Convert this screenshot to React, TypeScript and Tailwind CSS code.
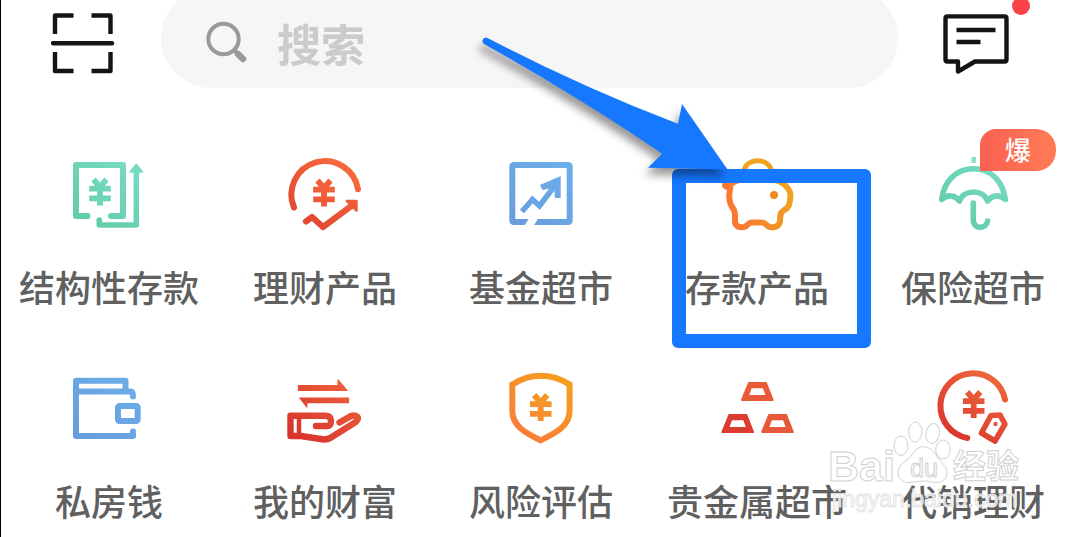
import type { ReactNode } from "react";

type Tone = "green" | "red" | "blue" | "orange" | "crimson";

const tones: Record<Tone, [string, string]> = {
  green: ["#78dcc4", "#62cbab"],
  red: ["#fb6c3c", "#df4634"],
  blue: ["#6bb0ea", "#699ddd"],
  orange: ["#f5a01e", "#fb7a3a"],
  crimson: ["#f0683c", "#d8342e"],
};

function Glyph({ id, tone, children }: { id: string; tone: Tone; children: ReactNode }) {
  const [from, to] = tones[tone];
  const paint = `url(#${id})`;
  return (
    <svg
      className="size-[88px]"
      viewBox="0 0 88 88"
      fill="none"
      stroke={paint}
      strokeWidth="6"
      strokeLinecap="round"
      strokeLinejoin="round"
      aria-hidden="true"
    >
      <defs>
        <linearGradient id={id} gradientUnits="userSpaceOnUse" x1="70" y1="10" x2="22" y2="76">
          <stop offset="0" stopColor={from} />
          <stop offset="1" stopColor={to} />
        </linearGradient>
      </defs>
      {children}
    </svg>
  );
}

function Yen({ x, y }: { x: number; y: number }) {
  return (
    <path
      transform={`translate(${x} ${y})`}
      d="M-6.5 -12.5 0 -5 6.5 -12.5M-10.8 -3.4H10.8M-10.8 6.4H10.8M0 -6V13.4"
      strokeWidth="5.8"
      strokeLinecap="butt"
      strokeLinejoin="miter"
    />
  );
}

function Structured() {
  return (
    <Glyph id="g-structured" tone="green">
      <path d="M22.5 66H11V15H58V66H46" />
      <path d="M34.3 70V75H71.3V22" strokeWidth="5.6" />
      <path d="M71.3 14.3 77.5 22H65Z" fill="#75d9c0" strokeWidth="1.5" />
      <Yen x={35} y={42} />
    </Glyph>
  );
}

function Wealth() {
  return (
    <Glyph id="g-wealth" tone="red">
      <path d="M13 57.5A33.5 33.5 0 1 1 77 39.3" />
      <path d="M25 71.5 31 67 42 77 71 55.5" strokeWidth="6.2" />
      <path d="M66 51H75.5V60.5Z" fill="#f0582f" strokeWidth="2.5" />
      <Yen x={43} y={43} />
    </Glyph>
  );
}

function Fund() {
  return (
    <Glyph id="g-fund" tone="blue">
      <rect x="15.3" y="15" width="57.4" height="57" rx="1.5" />
      <path d="M32.5 68 41.5 68 36.5 76 27 76Z" fill="#fff" stroke="none" />
      <path
        d="M25 61.5 35.5 49.5 42.5 56 59 34"
        strokeWidth="5.5"
        strokeLinecap="butt"
        strokeLinejoin="miter"
      />
      <path d="M43 35 63.7 26V48H58L57 37.5 45.5 40Z" fill="url(#g-fund)" stroke="none" />
    </Glyph>
  );
}

function Piggy() {
  return (
    <svg
      className="size-[88px]"
      viewBox="0 0 88 88"
      fill="none"
      stroke="url(#g-piggy)"
      strokeWidth="6"
      strokeLinecap="round"
      strokeLinejoin="round"
      aria-hidden="true"
    >
      <defs>
        <linearGradient id="g-piggy" gradientUnits="userSpaceOnUse" x1="14" y1="60" x2="76" y2="38">
          <stop offset="0" stopColor="#fb7434" />
          <stop offset="1" stopColor="#efa31f" />
        </linearGradient>
      </defs>
      <path d="M31.5 19C35 8 54 8 58 19" stroke="#efa31f" strokeWidth="5" />
      <path d="M12 35C12 37 15 37 17.5 36.5C15.5 45 15.5 50 18 55C20 59 22 60 22 64V71C22 77 27 77.5 31 77C35 76 35 72.5 39 72.5H49C53 72.5 53 76 57 77C62 78 66.5 76 67 71C67.3 66 67 63 70 61C73 59 75 58 76 55C77 52 77.5 47 77.5 44C77 40 74 37 71 34C60 26 28 26 17.5 34Z" />
      <circle cx="61" cy="45" r="4" fill="#f08c20" stroke="none" />
    </svg>
  );
}

function Umbrella() {
  return (
    <Glyph id="g-umbrella" tone="green">
      <path d="M44.7 7V13" stroke="#8fe0cc" strokeWidth="4.5" strokeLinecap="butt" />
      <path
        d="M12.7 49.5C15 31 27 18.7 44.5 18.7S74 31 76.3 49.5C70 44 63 45 58.5 51C54 39 35 39 30.5 51C26 45 19 44 12.7 49.5Z"
        strokeWidth="5.6"
      />
      <path d="M44.3 53V70C44.3 79.5 57.5 79.5 58.5 71" strokeWidth="5.6" />
    </Glyph>
  );
}

function Wallet() {
  return (
    <Glyph id="g-wallet" tone="blue">
      <path d="M68 67.5V72H11V16.8H60.5V27" />
      <path d="M11 27.5H66Q68 27.5 68 32.5" />
      <rect x="53" y="42" width="19.7" height="15" rx="1.5" />
    </Glyph>
  );
}

function Hand() {
  return (
    <Glyph id="g-hand" tone="crimson">
      <path d="M17.5 21.5H57V15.8L66 26.5H17.5Z" fill="url(#g-hand)" strokeWidth="1.2" />
      <path d="M67.5 34H18.8L25.8 43V38.6H67.5Z" fill="url(#g-hand)" strokeWidth="1.2" />
      <path
        d="M35 62H46Q50 62 50 57Q50 51.8 44 51.8H9.5V72H20L43 75.5Q47 75.5 50 73.5L74 58.5Q78.5 55 76 52.5Q73.5 50.5 69 52.5L58.5 58.5"
        strokeWidth="6.4"
      />
      <path d="M18 52V72" strokeWidth="4.5" />
    </Glyph>
  );
}

function Shield() {
  return (
    <Glyph id="g-shield" tone="orange">
      <path
        d="M43.7 11.8C34 11.8 24 15 15.3 20.5V47C15.3 63 31 70 43.7 76.3C56.5 70 72.6 63 72.6 47V20.5C64 15 53.5 11.8 43.7 11.8Z"
        strokeLinejoin="miter"
      />
      <Yen x={43.7} y={43.5} />
    </Glyph>
  );
}

function Ingots() {
  const ingot = "M36 19H53L59.7 36H29ZM38 23.2 34.8 32H53.8L50.6 23.2Z";
  return (
    <Glyph id="g-ingots" tone="crimson">
      <g fillRule="evenodd" strokeWidth="2">
        <path d={ingot} fill="#e95a38" stroke="#e95a38" />
        <path d={ingot} transform="translate(-19.6 32)" fill="#dc3c30" stroke="#dc3c30" />
        <path d={ingot} transform="translate(20.2 32)" fill="#e65a3b" stroke="#e65a3b" />
      </g>
    </Glyph>
  );
}

function Agency() {
  return (
    <Glyph id="g-agency" tone="crimson">
      <path d="M76 35.5A32.6 32.6 0 1 0 38.3 74" />
      <path d="M62 51.5 71 51 76 60 66 77 52.5 69Z" strokeWidth="5.6" />
      <circle cx="66.5" cy="60" r="2.2" fill="#df5a40" stroke="none" />
      <Yen x={44.7} y={40.5} />
    </Glyph>
  );
}

function Callout() {
  return (
    <div className="pointer-events-none absolute top-[19px] left-1/2 z-10 -ml-[85px] h-[179px] w-[199px] rounded-md border-[14px] border-[#1677ff]">
      <svg
        className="absolute -top-[163px] -left-[216px] h-[170px] w-[270px] drop-shadow-[-3px_7px_4px_rgba(0,0,0,0.4)]"
        viewBox="470 20 270 170"
        aria-hidden="true"
      >
        <path
          d="M487.5 38Q584 88 678 123.7L682 104 727.5 169.5 648 167.7 662.3 153.7Q580 98 484.5 44.2A3.4 3.4 0 0 1 487.5 38Z"
          fill="#1677ff"
        />
      </svg>
    </div>
  );
}

function Watermark() {
  return (
    <svg
      className="pointer-events-none absolute right-[50px] bottom-3 h-[110px] w-[210px]"
      viewBox="0 0 210 110"
      fill="#fff"
      fillOpacity="0.75"
      stroke="#d0d0d0"
      strokeWidth="1"
      fontFamily="'Liberation Sans', 'Noto Sans CJK SC', sans-serif"
    >
      <text x="8" y="66" fontSize="43" fontWeight="700">Bai</text>
      <ellipse cx="81" cy="30.7" rx="7" ry="9.7" />
      <ellipse cx="95.3" cy="17" rx="6.7" ry="10" />
      <ellipse cx="112.7" cy="18.5" rx="6.7" ry="10" transform="rotate(12 112.7 18.5)" />
      <ellipse cx="123" cy="34.5" rx="7.3" ry="9.5" />
      <path d="M103 31.7C95 31.7 93 41 87 45C81 49 78 53 78 58C78 64 83 67.5 89 67.5C95 67.5 98 66 103 66S111 67.5 116 67.5C123 67.5 127 63 127 57.5C127 51 121 48 118 43C115 38 111 31.7 103 31.7Z" />
      <text x="90" y="62" fontSize="25">du</text>
      <text x="133" y="63" fontSize="33" fontWeight="700">经验</text>
      <text x="12" y="92" fontSize="23" stroke="#e4e4e4">jingyan.baidu.com</text>
    </svg>
  );
}

const services: { label: string; icon: ReactNode; badge?: string; marked?: boolean }[] = [
  { label: "结构性存款", icon: <Structured /> },
  { label: "理财产品", icon: <Wealth /> },
  { label: "基金超市", icon: <Fund /> },
  { label: "存款产品", icon: <Piggy />, marked: true },
  { label: "保险超市", icon: <Umbrella />, badge: "爆" },
  { label: "私房钱", icon: <Wallet /> },
  { label: "我的财富", icon: <Hand /> },
  { label: "风险评估", icon: <Shield /> },
  { label: "贵金属超市", icon: <Ingots /> },
  { label: "代销理财", icon: <Agency /> },
];

export default function App() {
  return (
    <div className="relative min-h-screen overflow-hidden border-l border-black bg-white font-['Noto_Sans_CJK_SC',sans-serif]">
      <header className="flex h-[88px] items-start overflow-hidden pr-[70px] pl-[50px]">
        <button type="button" aria-label="扫一扫" className="mt-3 shrink-0">
          <svg
            className="h-16 w-16"
            viewBox="0 0 64 64"
            fill="none"
            stroke="#141414"
            strokeWidth="4.4"
            strokeLinejoin="round"
            aria-hidden="true"
          >
            <path d="M22.5 3.5H4V22M40.5 3.5H59.5V22M22.5 59H4V40M40.5 59H59.5V40" />
            <path d="M2 31.2H61" strokeLinecap="round" />
          </svg>
        </button>

        <label className="-mt-3 mr-[44px] ml-[46px] flex h-[100px] min-w-0 flex-1 items-center rounded-full bg-[#f6f6f6] pt-2.5 pl-[44px]">
          <svg className="h-11 w-11 shrink-0" viewBox="0 0 44 44" fill="none" stroke="#999" aria-hidden="true">
            <circle cx="18.5" cy="18" r="15.2" strokeWidth="4" />
            <path d="M29 29 32 32" strokeWidth="4" />
            <path d="M33 33 38 38" strokeWidth="6.5" strokeLinecap="round" />
          </svg>
          <input
            type="search"
            aria-label="搜索"
            placeholder="搜索"
            className="ml-7 h-16 min-w-0 flex-1 bg-transparent text-[44px] font-bold text-gray-700 outline-none placeholder:text-[#cbcbcb]"
          />
        </label>

        <button type="button" aria-label="消息" className="mt-3 shrink-0">
          <svg
            className="h-16 w-[68px]"
            viewBox="0 0 68 64"
            fill="none"
            stroke="#141414"
            strokeWidth="4.4"
            strokeLinejoin="round"
            aria-hidden="true"
          >
            <path d="M5.5 4.4H62.5Q64.5 4.4 64.5 6.4V47.5Q64.5 49.5 62.5 49.5H33L16 59.5V49.5H5.5Q3.5 49.5 3.5 47.5V6.4Q3.5 4.4 5.5 4.4Z" />
            <path d="M14.5 18H53.5M14.5 30H38.5" />
          </svg>
        </button>
      </header>
      <span className="absolute -top-[3px] right-[50px] size-[18px] rounded-full bg-[#fa4248]" />

      <nav className="-mr-px grid grid-cols-5 gap-y-[58px] pt-[62px] pb-3">
        {services.map((item) => (
          <a key={item.label} href="#" className="relative flex flex-col items-center">
            {item.icon}
            <span className="mt-7 text-4xl/10 font-medium whitespace-nowrap text-[#606060]">
              {item.label}
            </span>
            {item.badge && (
              <span className="absolute -top-[21px] left-1/2 ml-[7px] flex h-[42px] w-[76px] items-center justify-center rounded-tl-2xl rounded-r-[20px] bg-linear-to-r from-[#fb6052] to-[#ff7b56] pb-1 text-[26px] font-medium text-white">
                {item.badge}
              </span>
            )}
            {item.marked && <Callout />}
          </a>
        ))}
      </nav>

      <Watermark />
    </div>
  );
}
